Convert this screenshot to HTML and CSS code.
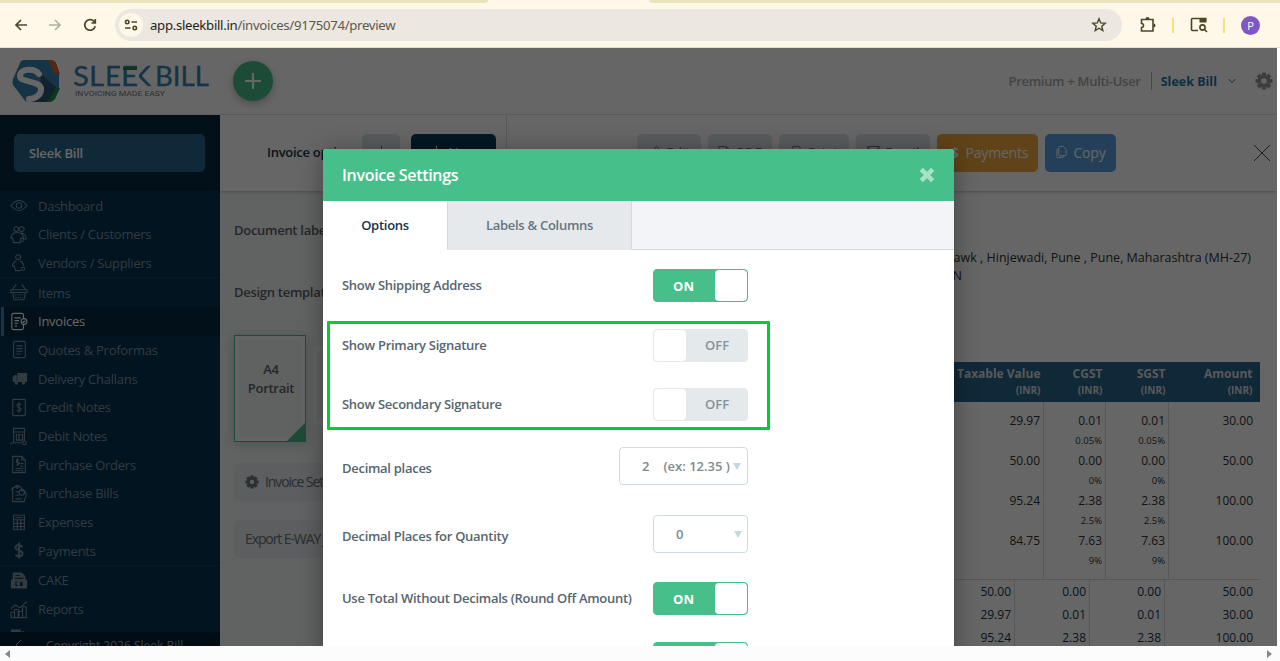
FILE: index.html
```
<!DOCTYPE html>
<html lang="en">

<head>
  <meta charset="UTF-8">
  <meta name="viewport" content="width=device-width, initial-scale=1.0">
  <title>Sleek Bill</title>
  <link rel="stylesheet" href="styles.css">
</head>

<body>
  <!-- browser bar -->
  <div class="browser">
    <div class="tab_strip"><span class="tab_left"></span><span class="tab_right"></span></div>
    <div class="nav_bar">
      <svg class="nav_icon" viewBox="0 0 16 16"><path d="M14 8H3M8 3L3 8l5 5" /></svg>
      <svg class="nav_icon off" viewBox="0 0 16 16"><path d="M2 8h11M8 3l5 5-5 5" /></svg>
      <svg class="nav_icon" viewBox="0 0 16 16"><path d="M14.200 9.200A5.300 5.300 0 1 1 13 4.400l1.300 1.400M14.300 2v4H10.400" /></svg>
      <div class="address">
        <span class="site_info">
          <svg viewBox="0 0 14 14"><circle cx="3.2" cy="4" r="1.7" /><path d="M7.5 4H13M1 10h5.5" /><circle cx="10.8" cy="10" r="1.7" /></svg>
        </span>
        <span class="url">app.sleekbill.in<span>/invoices/9175074/preview</span></span>
        <svg class="star" viewBox="0 0 16 16"><path d="M8 1.8l1.7 4.1 4.5.4-3.4 2.9 1 4.3L8 11.2l-3.8 2.3 1-4.3-3.4-2.9 4.5-.4z" /></svg>
      </div>
      <svg class="ext_icon" viewBox="0 0 18 18"><path d="M2.500 3.500H14V15H2.500v-3.500a2 2 0 0 0 0-4z" /><path class="fill" d="M6.500 3a2 2 0 0 1 4 0zM14.500 7.500a2 2 0 0 1 0 4z" /></svg>
      <span class="nav_line"></span>
      <svg class="ext_icon" viewBox="0 0 18 18"><path d="M8 14.500H2.500a1 1 0 0 1-1-1v-10a1 1 0 0 1 1-1h13v2.500" /><path class="fill" d="M9.500 2h7v4.500h-7z" /><circle cx="12.500" cy="11.500" r="2.600" /><path d="M14.500 13.500l2.500 2.500" /></svg>
      <span class="nav_line"></span>
      <span class="profile">P</span>
    </div>
  </div>

  <div class="viewport">
    <div class="app">
      <header class="header">
        <svg class="logo" viewBox="0 0 198 46">
          <path fill="#3a7fae" d="M12 2h26q4 0 6 4l3 9v15l-7 12q-2 2-5 2H17q-4 0-6-4L1 27q-1-3 0-6L8 5q1-3 4-3z" />
          <path fill="#2a5573" d="M29 16l16 14-7 11q-2 3-5 3H16q10-4 12-14z" />
          <path fill="#d0632c" d="M32 2h7q4 0 5 3l4 11h-6L38 5q-2-3-6-3z" />
          <path fill="#1f8a48" d="M43 30h5l-5 11q-2 3-5 3h-6q4 0 6-4z" />
          <path class="logo_s" d="M27 16c-4-6-19-6-19 2 0 7 19 4 21 12 1 6-5 11-12 11" />
          <text class="logo_text" x="61" y="28" textLength="31" lengthAdjust="spacingAndGlyphs">SL</text>
          <text class="logo_text" x="93" y="28" textLength="16" lengthAdjust="spacingAndGlyphs">E</text>
          <text class="logo_text" x="119" y="28" textLength="20" lengthAdjust="spacingAndGlyphs">K</text>
          <path fill="#fff" d="M119 6h8v24h-8z" />
          <text class="logo_text" x="109" y="28" textLength="17" lengthAdjust="spacingAndGlyphs">E</text>
          <path fill="#1f8a48" d="M111 9h14v3h-14z" />
          <text class="logo_text" x="143" y="28" textLength="54" lengthAdjust="spacingAndGlyphs">BILL</text>
          <text class="logo_sub" x="63" y="38" textLength="90" lengthAdjust="spacingAndGlyphs">INVOICING MADE EASY</text>
        </svg>
        <button class="add_btn" type="button"><svg viewBox="0 0 16 16"><path d="M8 0v16M0 8h16" /></svg></button>
        <div class="account">
          <span class="plan">Premium + Multi-User</span>
          <span class="user">Sleek Bill</span>
          <svg class="caret" viewBox="0 0 8 8"><path d="M.5 2L4 5.500 7.500 2" /></svg>
          <svg class="gear" viewBox="0 0 18 18"><use href="#gear" /></svg>
        </div>
      </header>

      <div class="body">
        <nav class="sidebar">
          <div class="company"><span>Sleek Bill</span></div>
          <ul class="menu">
            <li><svg viewBox="0 0 20 20"><path d="M1 10q9-11 18 0-9 11-18 0z" /><circle cx="10" cy="10" r="3" /></svg>Dashboard</li>
            <li><svg viewBox="0 0 20 20"><circle cx="7" cy="4" r="2.700" /><circle cx="13" cy="4" r="2.700" /><path d="M5 8q-4 2-4 6h2l1 5h7l1-5h3q0-5-5-6zM12 8q6 1 6 7h-3l-1 3h-3" /></svg>Clients / Customers</li>
            <li><svg viewBox="0 0 20 20"><circle cx="9" cy="4" r="2.700" /><path d="M7 8q-5 3-4 6h2l1 5h6M11 8q4 2 4 6" /><circle cx="14.500" cy="17" r="1.800" /></svg>Vendors / Suppliers</li>
          </ul>
          <ul class="menu">
            <li><svg viewBox="0 0 20 20"><path d="M1 7h18v3H1zM3 10l1.500 8h11l1.500-8M3 6l4-5M17 6l-4-5" /><path stroke-dasharray="1.500 1" d="M5 12.500h10M6 15.500h8" /></svg>Items</li>
            <li class="active"><svg viewBox="0 0 20 20"><path d="M15 6V3q0-2-2-2H4Q2 1 2 3v14q0 2 2 2h9q2 0 2-2v-3M5 6h7M5 9h5M5 12h4M5 15h3" /><circle cx="15.500" cy="10" r="3.200" /><path d="M14 10l1 1 2-2" /></svg>Invoices</li>
            <li><svg viewBox="0 0 20 20"><rect x="4" y="1" width="13" height="18" rx="1" /><path d="M7 6h7M7 9h7M7 12h7M7 15h5" /></svg>Quotes &amp; Proformas</li>
            <li><svg class="solid" viewBox="0 0 20 20"><path d="M8 4h11v10H8zM3 8l2-2h2.500v8H3z" /><circle cx="7" cy="15" r="2" /><circle cx="15" cy="15" r="2" /></svg>Delivery Challans</li>
            <li><svg viewBox="0 0 20 20"><rect x="3" y="1" width="14" height="18" rx="1" /><path d="M12.500 7q-2.500-2-4.500 0-1 2 2 3t2 3q-2 2-4.500 0M10 4v12" /></svg>Credit Notes</li>
            <li><svg viewBox="0 0 20 20"><path d="M4 17V1h12v14M4 5h12M7 8h7v6H7zM10 8v6M1 19q0-2 3-2h9" /><circle cx="16" cy="17" r="2" /></svg>Debit Notes</li>
            <li><svg viewBox="0 0 20 20"><path d="M3 1h10l4 4v14H3zM13 1v4h4M10 5q-3-1-3 1t3 2-3 3M8.500 3v9M12 9h3M11 12h4M6 14.500h9M6 17h9" /></svg>Purchase Orders</li>
            <li><svg viewBox="0 0 20 20"><path d="M4 4l2-2h5l2 3v3M3 4v15h13v-3M1 6l3-3M6 8h4M6 12h4M6 16h7" /><circle cx="13" cy="9" r="3" /><path d="M14 5q4 3 4 8l-2 4" /><circle cx="8" cy="2.500" r="1.500" /></svg>Purchase Bills</li>
            <li><svg viewBox="0 0 20 20"><path d="M4 2h12v16H4zM4 7h12M4 11h12M4 14.500h12M8 7v11M12 7v11M6 4.500h8" /></svg>Expenses</li>
            <li><svg class="bold" viewBox="0 0 20 20"><path d="M14 6q-4-3.500-7.500-1-2 3 3.500 5t3.500 5q-3 3-7.500 0M10 1v18" /></svg>Payments</li>
          </ul>
          <ul class="menu">
            <li><svg class="solid" viewBox="0 0 20 20"><path fill-rule="evenodd" d="M3 1h10l4 4v4h2v10H1V9h2zM6 4v1h5V4zM5 7v1h10V7zM6 11v5h3v-1H7v-3h2v-1zM11 12v4h3v-4z" /></svg>CAKE</li>
            <li><svg viewBox="0 0 20 20"><path d="M1 19v-6h4v6M5 19v-9h4v9M10 19v-7h4v7M14 19V7h4v12zM1 19h18M1 9l5-4 5 3 8-7" /></svg>Reports</li>
            <li><svg class="solid" viewBox="0 0 20 20"><path d="M1 1h11v8H1zM13 3h3v6h-3z" /></svg></li>
          </ul>
          <div class="copyright"><svg viewBox="0 0 8 10"><path d="M6 0L1 5l5 5" /></svg>Copyright 2026 Sleek Bill</div>
        </nav>

        <main class="content">
          <div class="toolbar">
            <div class="toolbar_left">
              <span class="toolbar_title">Invoice options</span>
              <button class="btn back" type="button"><svg viewBox="0 0 14 14"><path d="M7 0v12M3 8l4 4 4-4" /></svg></button>
              <button class="btn new" type="button"><svg viewBox="0 0 14 14"><path d="M7 0v13M1 7h12" /></svg>New</button>
            </div>
            <div class="toolbar_right">
              <button class="btn w64" type="button"><svg viewBox="0 0 14 14"><path d="M2 12l1-4 6-7 3 3-7 7z" /></svg>Edit</button>
              <button class="btn w65" type="button"><svg viewBox="0 0 14 14"><path d="M1 1h8l3 3v9H1zM9 1v3h3" /></svg>PDF</button>
              <button class="btn w70" type="button"><svg viewBox="0 0 14 14"><path d="M3 5V1h7l1 2v2M1 5h12v6H1z" /></svg>Print</button>
              <button class="btn w74" type="button"><svg viewBox="0 0 14 14"><path d="M1 1h12v11H1zM1 2l6 5 6-5" /></svg>Email</button>
              <button class="btn payments" type="button"><b>$</b>Payments</button>
              <button class="btn copy" type="button"><svg viewBox="0 0 14 14"><path d="M5 1h4l3 3v6q0 1-1 1H5q-1 0-1-1V2q0-1 1-1zM4 4H3Q2 4 2 5v7q0 1 1 1h5q1 0 1-1v-1" /></svg>Copy</button>
              <svg class="close_page" viewBox="0 0 18 18"><path d="M1 1l16 16M17 1L1 17" /></svg>
            </div>
          </div>

          <div class="workspace">
            <aside class="options">
              <h4>Document label</h4>
              <h4>Design template</h4>
              <div class="templates">
                <div class="template selected"><span>A4<br>Portrait</span></div>
                <div class="template small"></div>
              </div>
              <button class="option_btn" type="button"><svg viewBox="0 0 18 18"><use href="#gear" /></svg>Invoice Settings</button>
              <button class="option_btn" type="button">Export E-WAY JSON</button>
            </aside>

            <section class="invoice">
              <p class="seller">Chawk , Hinjewadi, Pune , Pune, Maharashtra (MH-27)</p>
              <p class="seller gstin">GSTIN</p>
              <div class="items">
                <div class="items_head">
                  <span>Taxable Value<small>(INR)</small></span>
                  <span>CGST<small>(INR)</small></span>
                  <span>SGST<small>(INR)</small></span>
                  <span>Amount<small>(INR)</small></span>
                </div>
                <div class="items_body">
                  <div class="col"><span>29.97</span><span>50.00</span><span>95.24</span><span>84.75</span></div>
                  <div class="col"><span>0.01<small>0.05%</small></span><span>0.00<small>0%</small></span><span>2.38<small>2.5%</small></span><span>7.63<small>9%</small></span></div>
                  <div class="col"><span>0.01<small>0.05%</small></span><span>0.00<small>0%</small></span><span>2.38<small>2.5%</small></span><span>7.63<small>9%</small></span></div>
                  <div class="col"><span>30.00</span><span>50.00</span><span>100.00</span><span>100.00</span></div>
                </div>
              </div>
              <div class="totals">
                <div class="col"><span>50.00</span><span>29.97</span><span>95.24</span></div>
                <div class="col"><span>0.00</span><span>0.01</span><span>2.38</span></div>
                <div class="col"><span>0.00</span><span>0.01</span><span>2.38</span></div>
                <div class="col"><span>50.00</span><span>30.00</span><span>100.00</span></div>
              </div>
            </section>
          </div>
        </main>
      </div>
    </div>

    <div class="backdrop"></div>

    <div class="modal">
      <div class="modal_header">
        <span>Invoice Settings</span>
        <svg viewBox="0 0 14 14"><path d="M2 2l10 10M12 2L2 12" /></svg>
      </div>
      <div class="modal_tabs">
        <span class="modal_tab active">Options</span>
        <span class="modal_tab">Labels &amp; Columns</span>
      </div>
      <div class="settings">
        <div class="setting"><label>Show Shipping Address</label><span class="switch on">ON</span></div>
        <div class="highlight">
          <div class="setting"><label>Show Primary Signature</label><span class="switch">OFF</span></div>
          <div class="setting"><label>Show Secondary Signature</label><span class="switch">OFF</span></div>
        </div>
        <div class="setting tall first"><label>Decimal places</label><span class="select wide"><span>2</span><span>(ex: 12.35 )</span></span></div>
        <div class="setting tall"><label>Decimal Places for Quantity</label><span class="select"><span>0</span></span></div>
        <div class="setting"><label>Use Total Without Decimals (Round Off Amount)</label><span class="switch on">ON</span></div>
        <div class="setting"><label></label><span class="switch on"></span></div>
      </div>
    </div>
  </div>

  <div class="scrollbar"><span class="arrow_left"></span><span class="arrow_right"></span></div>

  <svg class="defs">
    <symbol id="gear" viewBox="0 0 18 18">
      <circle cx="9" cy="9" r="4.700" fill="none" stroke="currentColor" stroke-width="3.800" />
      <path stroke="currentColor" stroke-width="4" d="M9 .5v3M9 14.500v3M.5 9h3M14.500 9h3M3 3l2 2M13 13l2 2M15 3l-2 2M5 13l-2 2" />
    </symbol>
  </svg>
</body>

</html>
```
FILE: styles.css
```
* {
  box-sizing: border-box;
}

body {
  margin: 0;
  width: 1280px;
  height: 661px;
  overflow: hidden;
  font-family: "Open Sans", "Noto Sans", sans-serif;
  font-size: 13px;
  background-color: #fff;
}

ul,
p,
h4 {
  margin: 0;
  padding: 0;
  list-style: none;
}

button {
  font-family: inherit;
  border: none;
}

svg {
  fill: none;
  stroke: currentColor;
  flex: none;
}

.defs {
  display: none;
}

/* browser bar */
.browser {
  height: 48px;
  background-color: #fef8e9;
  border-bottom: 1px solid #e4decf;
}

.tab_strip {
  height: 3px;
  display: flex;
  justify-content: space-between;
}

.tab_left {
  width: 488px;
  background-color: #ebe3bb;
  border-bottom-right-radius: 6px;
}

.tab_right {
  width: 631px;
  background-color: #ebe3bb;
  border-bottom-left-radius: 6px;
}

.nav_bar {
  height: 44px;
  display: flex;
  align-items: center;
  padding-left: 13px;
  color: #4b4628;
}

.nav_icon {
  width: 16px;
  height: 16px;
  margin-right: 18px;
  stroke-width: 1.7;
}

.nav_icon.off {
  color: #b4b09f;
}

.address {
  width: 1007px;
  height: 32px;
  border-radius: 16px;
  background-color: #ece7e0;
  display: flex;
  align-items: center;
  padding: 0 15px 0 4px;
}

.site_info {
  width: 24px;
  height: 24px;
  border-radius: 50%;
  background-color: #fef8e9;
  display: flex;
  align-items: center;
  justify-content: center;
}

.site_info svg {
  width: 14px;
  height: 14px;
  stroke-width: 1.6;
}

.url {
  margin-left: 7px;
  font-family: "Noto Sans", sans-serif;
  font-size: 13.2px;
  letter-spacing: -0.3px;
  color: #1f1f1a;
  flex: 1;
}

.url span {
  color: #5c584b;
}

.star {
  width: 16px;
  height: 16px;
  stroke-width: 1.4;
}

.ext_icon {
  width: 18px;
  height: 18px;
  margin-left: 17px;
  stroke-width: 1.6;
}

.ext_icon .fill {
  fill: currentColor;
  stroke: none;
}

.nav_line {
  width: 2px;
  height: 15px;
  background-color: #f3e27b;
  margin-left: 15px;
}

.nav_line + .ext_icon {
  margin-left: 16px;
}

.profile {
  width: 19px;
  height: 19px;
  border-radius: 50%;
  background-color: #7e57c2;
  color: #fff;
  font-size: 11px;
  line-height: 19px;
  text-align: center;
  margin-left: 16px;
}

/* page */
.viewport {
  position: relative;
  width: 1277px;
  height: 598px;
  overflow: hidden;
}

.backdrop {
  position: absolute;
  inset: 0;
  background-color: rgba(0, 0, 0, 0.6);
}

.header {
  height: 67px;
  display: flex;
  align-items: center;
  padding-left: 12px;
  border-bottom: 1px solid #eee;
}

.logo {
  width: 198px;
  height: 46px;
  stroke: none;
  overflow: visible;
}

.logo_s {
  fill: none;
  stroke: #fff;
  stroke-width: 6;
  stroke-linecap: round;
}

.logo_text {
  font-family: Lato, sans-serif;
  font-size: 26px;
  fill: #3a7fae;
  stroke: #3a7fae;
  stroke-width: 0.3;
}

.logo_sub {
  font-family: Roboto, sans-serif;
  font-size: 8px;
  fill: #777;
}

.add_btn {
  width: 40px;
  height: 40px;
  padding: 0;
  margin-left: 23px;
  border-radius: 50%;
  background-color: #47bf8a;
  color: #fff;
  box-shadow: 0 3px 8px rgba(0, 0, 0, 0.25);
  display: flex;
  align-items: center;
  justify-content: center;
}

.add_btn svg {
  width: 16px;
  height: 16px;
  stroke-width: 2.2;
}

.account {
  margin-left: auto;
  display: flex;
  align-items: center;
  font-weight: 600;
  color: #aaa;
}

.plan {
  padding-right: 10px;
  border-right: 1px solid #a8b4c4;
  letter-spacing: -0.28px;
}

.user {
  margin-left: 9px;
  font-weight: 700;
  font-size: 12.5px;
  color: #2376ab;
}

.caret {
  width: 8px;
  height: 8px;
  margin-left: 11px;
  color: #2376ab;
}

.gear {
  width: 18px;
  height: 18px;
  margin: 0 4px 0 19px;
  color: #999;
  stroke: none;
}

.body {
  display: flex;
  height: 531px;
}

/* sidebar */
.sidebar {
  width: 220px;
  background-color: #05324e;
  display: flex;
  flex-direction: column;
  overflow: hidden;
}

.company {
  height: 76.2px;
  padding: 19px 15px 0 14px;
  background-color: #052a40;
  flex: none;
}

.company span {
  display: block;
  height: 38px;
  padding-left: 15px;
  border-radius: 5px;
  background-color: #2a6690;
  color: #fff;
  font-weight: 600;
  letter-spacing: -0.2px;
  line-height: 38px;
}

.menu {
  flex: none;
}

.menu + .menu {
  border-top: 1px solid #15425e;
}

.menu li {
  height: 28.7px;
  display: flex;
  align-items: center;
  padding-left: 10px;
  color: #7c93a2;
  letter-spacing: -0.25px;
}

.menu svg {
  width: 18px;
  height: 19px;
  margin-right: 10px;
  stroke-width: 1.2;
}

.menu svg.solid {
  fill: currentColor;
  stroke: none;
}

.menu svg.bold {
  stroke-width: 2.2;
}

.menu li.active {
  padding-left: 6px;
  margin-left: 1px;
  border-left: 3px solid #3a7fae;
  background-color: #052a40;
  color: #fff;
}

.copyright {
  position: relative;
  margin-top: -20px;
  padding: 4px 0 0 15px;
  height: 40px;
  flex: none;
  background-color: #042235;
  color: #99a8b2;
  font-size: 12px;
  line-height: 20px;
}

.copyright svg {
  width: 8px;
  height: 10px;
  margin-right: 23px;
}

/* content */
.content {
  flex: 1;
}

.toolbar {
  height: 76px;
  display: flex;
  background-color: #fff;
  box-shadow: 0 1px 3px rgba(0, 0, 0, 0.25);
  position: relative;
}

.toolbar_left {
  width: 287px;
  padding: 19px 10px 0 0;
  border-right: 1px solid #ddd;
  display: flex;
  justify-content: flex-end;
}

.toolbar_title {
  flex: 1;
  margin-left: 47px;
  line-height: 37px;
  font-weight: 600;
  letter-spacing: -0.28px;
  color: #14354c;
  white-space: nowrap;
}

.btn {
  height: 38px;
  padding: 0 0 2px;
  border-radius: 5px;
  background-color: #dfe6e9;
  color: #5c6b75;
  font-size: 14px;
  letter-spacing: -0.2px;
  display: flex;
  align-items: center;
  justify-content: center;
  gap: 5px;
}

.btn svg {
  width: 13px;
  height: 14px;
}

.btn.back {
  width: 38px;
}

.btn.new {
  width: 85px;
  margin-left: 11px;
  background-color: #0a3a5a;
  color: #fff;
}

.toolbar_right {
  flex: 1;
  display: flex;
  gap: 7px;
  padding: 19px 6px 0 130px;
}

.w64 {
  width: 64px;
}

.w65 {
  width: 64px;
}

.w70 {
  width: 70px;
}

.w74 {
  width: 74px;
}

.btn.payments {
  width: 101px;
  padding-left: 4px;
  background-color: #f0a73c;
  color: #fff;
  gap: 7px;
}

.btn.copy {
  width: 71px;
  background-color: #5b9fe0;
  color: #fff;
}

.close_page {
  width: 18px;
  height: 18px;
  margin: 10px 0 0 auto;
  color: #40505c;
}

.workspace {
  display: flex;
  height: 455px;
}

.options {
  width: 287px;
  padding: 30px 0 0 14px;
  background-color: #f3f6f6;
}

.options h4 {
  height: 62px;
  font-size: 13px;
  font-weight: 600;
  letter-spacing: -0.28px;
  line-height: 18px;
  color: #596269;
}

.templates {
  display: flex;
  gap: 7px;
  margin-top: -10px;
  height: 128px;
}

.template {
  width: 72px;
  height: 107px;
  border: 4px solid #fff;
  background-color: #f1f3f3;
  color: #596269;
  font-weight: 600;
  letter-spacing: -0.28px;
  line-height: 19px;
  text-align: center;
}

.template.selected {
  position: relative;
  border: 1px solid #47bf8a;
  padding: 24px 0 0 2px;
  box-shadow: inset 0 0 0 4px #fafafa, 0 2px 12px rgba(0, 0, 0, 0.2);
}

/* green corner of the chosen template */
.template.selected::after {
  content: "";
  position: absolute;
  right: 0;
  bottom: 0;
  border-left: 18px solid transparent;
  border-bottom: 18px solid #47bf8a;
}

.template.small {
  height: 77px;
  margin-top: 12px;
}

.option_btn {
  width: 220px;
  height: 38px;
  margin-bottom: 19px;
  padding: 0 11px 1px;
  border-radius: 5px;
  background-color: #e5eaed;
  color: #6a757d;
  font-size: 14px;
  letter-spacing: -1.1px;
  display: flex;
  align-items: center;
}

.option_btn svg {
  width: 14px;
  height: 14px;
  margin-right: 6px;
  stroke: none;
}

/* invoice preview */
.invoice {
  flex: 1;
  padding: 58px 17px 0 0;
  color: #333;
}

.seller {
  padding-right: 9px;
  font-size: 12.5px;
  line-height: 18px;
  text-align: right;
}

.seller.gstin {
  padding-right: 298px;
}

.items {
  margin-top: 77px;
}

.items_head,
.items_body {
  display: grid;
  grid-template-columns: 1fr 62px 63px 91px;
  text-align: right;
}

.items_head {
  height: 40px;
  background-color: #2a6690;
  color: #ddd;
  font-size: 12px;
  font-weight: 700;
  line-height: 17px;
  padding-top: 3px;
}

.items_head span {
  padding-right: 3.5px;
}

.items_head span:last-child {
  padding-right: 7.5px;
}

.items_head small {
  display: block;
  font-size: 10px;
}

.items_body {
  height: 178px;
  border-bottom: 1px solid #dadada;
}

.col {
  padding-right: 3px;
  font-size: 12px;
  font-weight: 500;
  line-height: 20px;
  text-align: right;
  border-right: 1px solid #ddd;
}

.col:last-child {
  border-right: none;
  padding-right: 7px;
}

.items_body .col {
  padding-top: 9px;
}

.items_body .col span {
  display: block;
  height: 40px;
}

.items_body small {
  display: block;
  font-size: 9.5px;
}

.totals {
  display: grid;
  grid-template-columns: 1fr 75px 75px 95px;
  color: #14354c;
}

.totals .col span {
  display: block;
  line-height: 23px;
}

/* settings dialog */
.modal {
  position: absolute;
  left: 323px;
  top: 101px;
  width: 631px;
  height: 600px;
  border-radius: 4px 4px 0 0;
  background-color: #fff;
  box-shadow: 0 3px 24px rgba(0, 0, 0, 0.35);
}

.modal_header {
  height: 52px;
  padding: 0 19px;
  border-radius: 4px 4px 0 0;
  background-color: #47bf8a;
  color: #fff;
  font-size: 16px;
  font-weight: 600;
  letter-spacing: -0.3px;
  display: flex;
  align-items: center;
  justify-content: space-between;
}

.modal_header svg {
  width: 16px;
  height: 16px;
  color: #a9e0c8;
  stroke-width: 4;
}

.modal_tabs {
  height: 49px;
  display: flex;
  background-color: #f3f4f7;
  border-bottom: 1px solid #d2dade;
}

.modal_tab {
  width: 185px;
  height: 49px;
  background-color: #e5e9ec;
  border: 1px solid #d2dade;
  border-top: none;
  border-bottom-color: #e5e9ec;
  color: #66757e;
  font-weight: 600;
  letter-spacing: -0.28px;
  line-height: 48px;
  text-align: center;
}

.modal_tab.active {
  width: 124px;
  border: none;
  background-color: #fff;
  color: #14354c;
}

.settings {
  width: 425px;
  padding: 6px 0 0 19px;
}

.setting {
  height: 59.4px;
  display: flex;
  align-items: center;
  justify-content: space-between;
  color: #56656f;
  font-weight: 600;
}

.setting label {
  padding-bottom: 1px;
  letter-spacing: -0.28px;
}

.setting.tall {
  height: 68px;
}

.setting.tall label {
  padding-top: 5px;
}

.setting.first {
  margin-top: -2px;
}

.setting.tall + .setting:not(.tall) {
  margin-top: 1px;
}

/* frame around the signature switches */
.highlight {
  position: relative;
}

.highlight::before {
  content: "";
  position: absolute;
  left: -15px;
  right: -22px;
  top: 6px;
  bottom: 4px;
  border: 3px solid #00cc33;
  border-radius: 1px;
}

.switch {
  width: 95px;
  height: 33px;
  border: 1px solid #e4e9ec;
  border-radius: 4px;
  background-color: #e4e9ec;
  color: #85929b;
  display: flex;
  align-items: center;
}

.switch::before {
  content: "";
  width: 32px;
  height: 31px;
  margin-right: 19px;
  border-radius: 4px;
  background-color: #fff;
}

.switch.on {
  flex-direction: row-reverse;
  border-color: #47bf8a;
  background-color: #47bf8a;
  color: #fff;
  font-weight: 700;
}

.switch.on::before {
  margin: 0 0 0 21px;
}

.select {
  width: 95px;
  height: 38px;
  border: 1px solid #ccdbe2;
  border-radius: 4px;
  color: #7d8992;
  padding: 0 5px 0 22px;
  display: flex;
  align-items: center;
  gap: 14px;
}

.select.wide {
  width: 129px;
}

.select::after {
  content: "";
  margin-left: auto;
  border: 4px solid transparent;
  border-top: 7px solid #c5d7df;
  border-bottom: none;
}

.select.wide::after {
  margin-left: -11px;
}

/* bottom scrollbar */
.scrollbar {
  height: 15px;
  padding: 0 8px 0 5px;
  background-color: #fcfcfc;
  display: flex;
  align-items: center;
  justify-content: space-between;
}

.arrow_left,
.arrow_right {
  border: 4px solid transparent;
  border-left-width: 0;
  border-right: 5px solid #888;
}

.arrow_right {
  border-right-width: 0;
  border-left: 5px solid #888;
}
```
